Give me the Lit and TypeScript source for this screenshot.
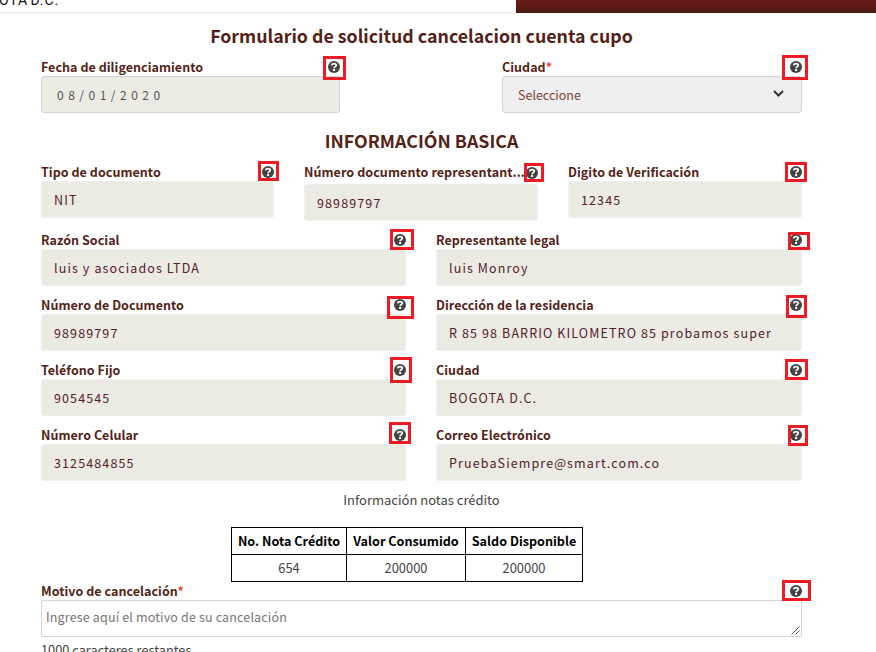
import { LitElement, html, css, svg, nothing } from "lit";
import { customElement, property } from "lit/decorators.js";
import { styleMap } from "lit/directives/style-map.js";

const FONT = css`"Noto Sans CJK SC", "Noto Sans", sans-serif`;

/** Highlight frame around a help icon: left, top, width, height relative to the icon. */
type Frame = [number, number, number, number];

@customElement("help-icon")
class HelpIcon extends LitElement {
  @property({ attribute: false }) frame: Frame = [-4, -4, 20, 20];

  static styles = css`
    :host { display: block; position: relative; width: 12px; height: 12px; flex: none; }
    svg { display: block; }
    .frame { position: absolute; box-sizing: border-box; border: 3px solid #ed1c24; z-index: 2; }
  `;

  render() {
    const [l, t, w, h] = this.frame;
    return html`
      <svg width="12" height="12" viewBox="0 0 12 12">
        <circle cx="6" cy="6" r="6" fill="#444"></circle>
        ${svg`<path d="M3.6 4.4C3.9 3 4.9 2.6 6 2.6c1.3 0 2.3.6 2.3 1.7C8.3 5.7 6.1 5.6 6.1 7.2" fill="none" stroke="#fff" stroke-width="1.7"/><path d="M5.1 8h2v2h-2z" fill="#fff"/>`}
      </svg>
      <span class="frame" style=${styleMap({ left: `${l}px`, top: `${t}px`, width: `${w}px`, height: `${h}px` })}></span>
    `;
  }
}

@customElement("form-field")
class FormField extends LitElement {
  @property() label = "";
  @property() value = "";
  @property() kind = "text";
  @property({ type: Boolean }) required = false;
  @property({ attribute: false }) frame: Frame = [-4, -4, 20, 20];

  static styles = css`
    :host { display: block; min-width: 0; font-family: ${FONT}; }
    .head { display: flex; justify-content: space-between; height: 19px; }
    .label { flex: 1; min-width: 0; white-space: nowrap; font-size: 12.5px; letter-spacing: 0.04px; line-height: 20px; font-weight: 700; color: #541f17; }
    .star { color: #e0452f; font-weight: 700; }
    help-icon { margin-top: 4px; }
    .box { box-sizing: border-box; height: 37px; border: 1px solid #eeeeee; border-radius: 3px; background: #ebebe4; padding: 0 12px 1px; display: flex; align-items: center; font-size: 12.5px; letter-spacing: 1.12px; color: #55202a; white-space: nowrap; overflow: hidden; }
    .date { border-color: #d0d4df; color: #555; padding: 0 15px 1px; font-size: 12px; letter-spacing: 4.5px; }
    .select { border-color: #d0d4df; background: #efefef; color: #7b3f38; padding: 0 17px 1px 15px; letter-spacing: 0; justify-content: space-between; }
    .select svg { margin-top: -1px; }
    .tall .head { height: 22px; }
    .tall .label { line-height: 20px; letter-spacing: 0.08px; }
    .tall help-icon { margin-top: 5px; }
    .area { position: relative; border-color: #d3d1dc; border-radius: 2px; background: #fff; color: #757575; padding: 0 4px 5px; letter-spacing: 0.16px; }
    .grip { position: absolute; right: 1px; bottom: 1px; }
  `;

  render() {
    return html`
      <div class=${this.kind === "tall" ? "tall" : ""}>
        <div class="head">
          <span class="label">${this.label}${this.required ? html`<span class="star">*</span>` : nothing}</span>
          <help-icon .frame=${this.frame}></help-icon>
        </div>
        <div class="box ${this.kind === "tall" ? "" : this.kind}">
          <span>${this.value}</span>
          ${this.kind === "select"
            ? html`<svg width="11" height="8" viewBox="0 0 11 8"><path d="M1 1l4.5 4.5L10 1" fill="none" stroke="#333" stroke-width="2"></path></svg>`
            : nothing}
          ${this.kind === "area"
            ? html`<svg class="grip" width="9" height="9" viewBox="0 0 9 9"><path d="M.5 8.5l8-8M4.5 8.5l4-4" fill="none" stroke="#555" stroke-width="1"></path></svg>`
            : nothing}
        </div>
      </div>
    `;
  }
}

interface FieldData { label: string; value: string; frame: Frame; kind?: string; required?: boolean; }

const GENERAL: FieldData[] = [
  { label: "Fecha de diligenciamiento", value: "08/01/2020", kind: "date", frame: [-5, -5, 23, 24] },
  { label: "Ciudad", value: "Seleccione", kind: "select", required: true, frame: [-8, -6, 26, 25] },
];
const IDENTITY: FieldData[] = [
  { label: "Tipo de documento", value: "NIT", frame: [-4, -5, 21, 20] },
  { label: "Número documento representant...", value: "98989797", kind: "tall", frame: [-2, -4, 20, 19] },
  { label: "Digito de Verificación", value: "12345", frame: [-5, -4, 22, 20] },
];
const CONTACT: FieldData[] = [
  { label: "Razón Social", value: "luis y asociados LTDA", frame: [-4, -5, 24, 21] },
  { label: "Representante legal", value: "luis Monroy", frame: [-2, -2, 22, 18] },
  { label: "Número de Documento", value: "98989797", frame: [-7, -3, 27, 23] },
  { label: "Dirección de la residencia", value: "R 85 98 BARRIO KILOMETRO 85 probamos super", frame: [-4, -4, 21, 23] },
  { label: "Teléfono Fijo", value: "9054545", frame: [-4, -7, 22, 26] },
  { label: "Ciudad", value: "BOGOTA D.C.", frame: [-5, -5, 23, 21] },
  { label: "Número Celular", value: "3125484855", frame: [-5, -7, 22, 22] },
  { label: "Correo Electrónico", value: "PruebaSiempre@smart.com.co", frame: [-2, -4, 20, 21] },
];
const REASON: FieldData = {
  label: "Motivo de cancelación", value: "Ingrese aquí el motivo de su cancelación", kind: "area", required: true, frame: [-8, -5, 29, 21],
};

const field = (f: FieldData) => html`
  <form-field .label=${f.label} .value=${f.value} .kind=${f.kind ?? "text"} .required=${!!f.required} .frame=${f.frame}></form-field>
`;

@customElement("app-root")
class AppRoot extends LitElement {
  static styles = css`
    :host { display: block; box-sizing: border-box; width: 876px; height: 652px; overflow: hidden; background: #fff; font-family: ${FONT}; color: #444; }
    .bar { display: flex; height: 13px; }
    .place { box-sizing: border-box; width: 516px; height: 13px; border-bottom: 1px solid #e9e9e9; overflow: hidden; display: flex; align-items: flex-end; }
    .place span { font-family: Roboto, sans-serif; font-size: 14px; line-height: 16px; letter-spacing: 0.9px; word-spacing: -2px; color: #111; margin: 0 0 4px -1px; white-space: nowrap; }
    .accent { flex: 1; background: linear-gradient(#6c1b19, #4a1912); }
    .form { padding: 0 74px 0 41px; }
    h1, h2 { margin: 0; text-align: center; font-weight: 700; color: #541f17; white-space: nowrap; }
    h1 { font-size: 17.8px; line-height: 24px; padding-top: 10px; height: 34px; }
    h2 { font-size: 17.8px; line-height: 24px; padding-top: 15px; height: 34px; }
    .two { display: grid; grid-template-columns: 299px 300px; justify-content: space-between; }
    .three { display: grid; grid-template-columns: 233px 234px 234px; column-gap: 30px; height: 68px; }
    .pairs { display: grid; grid-template-columns: 365px 366px; column-gap: 30px; row-gap: 9px; }
    .caption { text-align: center; font-size: 13px; line-height: 19px; padding-top: 9px; height: 37px; }
    table { border-collapse: collapse; margin: 0 auto; table-layout: fixed; width: 352px; font-size: 12.6px; line-height: 19px; }
    th, td { box-sizing: border-box; border: 1px solid #000; padding: 0 0 2px; height: 27px; text-align: center; white-space: nowrap; }
    th { color: #000; font-weight: 700; }
    td { font-size: 12.9px; }
    .credit { height: 54px; margin-right: 29px; }
    .note { font-size: 12.8px; line-height: 19px; padding-top: 3px; }
  `;

  render() {
    return html`
      <div class="bar"><div class="place"><span>OTA D.C.</span></div><div class="accent"></div></div>
      <div class="form">
        <h1>Formulario de solicitud cancelacion cuenta cupo</h1>
        <div class="two">${GENERAL.map(field)}</div>
        <h2>INFORMACIÓN BASICA</h2>
        <div class="three">${IDENTITY.map(field)}</div>
        <div class="pairs">${CONTACT.map(field)}</div>
        <div class="caption">Información notas crédito</div>
        <div class="credit">
          <table>
            <colgroup><col style="width:115px"><col style="width:119px"><col style="width:117px"></colgroup>
            <tr><th>No. Nota Crédito</th><th>Valor Consumido</th><th>Saldo Disponible</th></tr>
            <tr><td>654</td><td>200000</td><td>200000</td></tr>
          </table>
        </div>
        ${field(REASON)}
        <div class="note">1000 caracteres restantes</div>
      </div>
    `;
  }
}
